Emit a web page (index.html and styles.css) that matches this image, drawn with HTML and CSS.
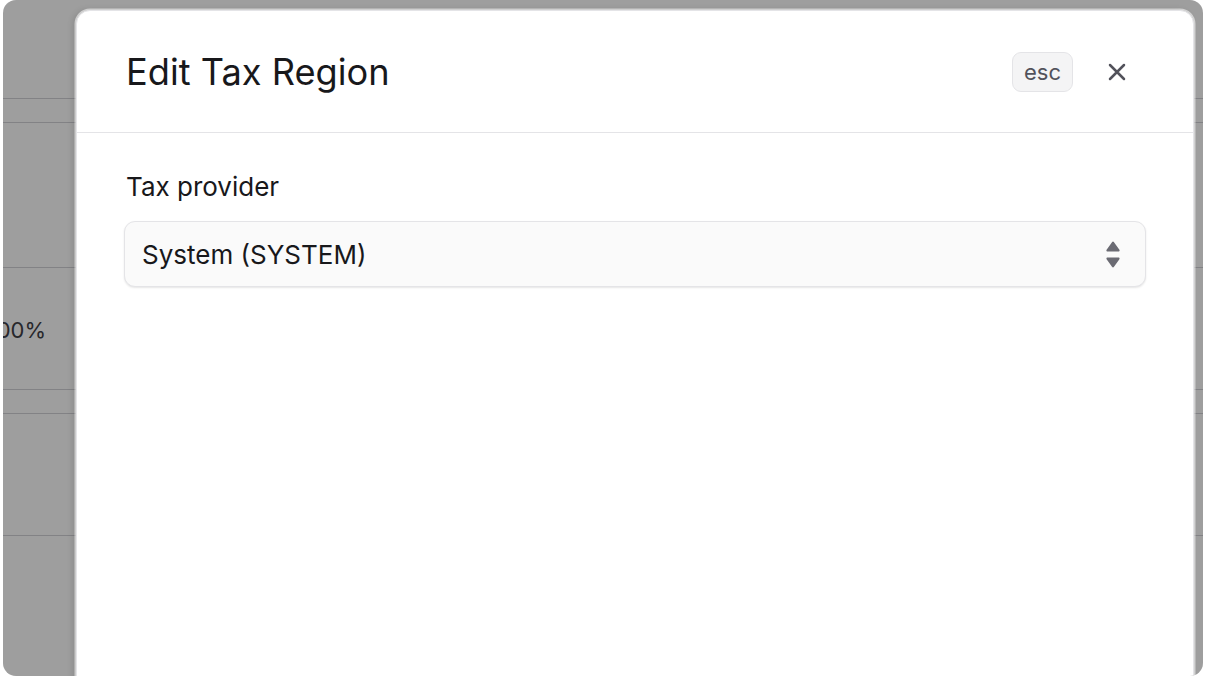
FILE: index.html
```html
<!DOCTYPE html>
<html lang="en">
<head>
<meta charset="utf-8">
<title>Edit Tax Region</title>
<link rel="stylesheet" href="styles.css">
</head>
<body>
<div class="screen">
  <div class="page">
    <div class="row row-head"></div>
    <div class="row row-gap"></div>
    <div class="row row-a"></div>
    <div class="row row-b"><div class="cell"><span>100.00%</span></div></div>
    <div class="row row-gap"></div>
    <div class="row row-c"></div>
    <div class="row row-rest"></div>
  </div>
  <div class="overlay"></div>
  <div class="modal">
    <div class="modal-header">
      <h2 class="title">Edit Tax Region</h2>
      <div class="actions">
        <kbd class="kbd">esc</kbd>
        <button class="close" aria-label="Close">
          <svg width="18" height="18" viewBox="0 0 18 18" fill="none" stroke="currentColor" stroke-width="2.5" stroke-linecap="round"><path d="M2 2L16 16M16 2L2 16"/></svg>
        </button>
      </div>
    </div>
    <div class="modal-body">
      <label class="label">Tax provider</label>
      <div class="select">
        <span class="select-value">System (SYSTEM)</span>
        <svg class="sort" width="14" height="27" viewBox="0 0 14 27" fill="currentColor"><path d="M6 1.2a1.2 1.2 0 0 1 2 0l5.4 7.6c.5.7 0 1.7-.9 1.7H1.5c-.9 0-1.4-1-.9-1.7z"/><path d="M6 25.8a1.2 1.2 0 0 0 2 0l5.4-7.6c.5-.7 0-1.7-.9-1.7H1.5c-.9 0-1.4 1-.9 1.7z"/></svg>
      </div>
    </div>
  </div>
</div>
</body>
</html>
```

FILE: styles.css
```css
* { box-sizing: border-box; }
html, body { margin: 0; padding: 0; background: #ffffff; }
body {
  font-family: Inter, "Noto Sans", "Liberation Sans", sans-serif;
  width: 1205px;
  height: 678px;
  overflow: hidden;
}
.screen {
  position: relative;
  margin: 0 2px 0 3px;
  height: 676px;
  border-radius: 13px;
  overflow: hidden;
  background: #fafafa;
}
.page {
  display: flex;
  flex-direction: column;
  height: 100%;
}
.row { border-bottom: 1px solid #cfcfd3; flex: none; }
.row-head { height: 99px; }
.row-gap { height: 24px; }
.row-a { height: 145px; }
.row-b { height: 122px; display: flex; align-items: center; }
.row-c { height: 122px; }
.row-rest { flex: 1; border-bottom: none; }
.cell {
  width: 43px;
  display: flex;
  justify-content: flex-end;
  overflow: hidden;
  white-space: nowrap;
  font-size: 22px;
  color: #3f3f46;
  padding-top: 2px;
}
.overlay {
  position: absolute;
  inset: 0;
  background: rgba(0, 0, 0, 0.37);
}
.modal {
  position: absolute;
  left: 73px;
  top: 10px;
  width: 1118px;
  height: 700px;
  background: #ffffff;
  border: 1px solid #e4e4e7;
  border-radius: 14px;
  box-shadow: 0 0 0 1.5px rgba(255,255,255,0.55), -3px 0 6px rgba(0,0,0,0.12);
}
.modal-header {
  height: 122px;
  display: flex;
  align-items: center;
  justify-content: space-between;
  padding: 0 58px 0 49px;
  border-bottom: 1px solid #e4e4e7;
}
.title {
  margin: 0;
  font-size: 36.2px;
  font-weight: 400;
  color: #18181b;
}
.actions { display: flex; align-items: center; gap: 26px; }
.kbd {
  font-family: Inter, "Noto Sans", sans-serif;
  height: 40px;
  padding: 0 11px;
  display: flex;
  align-items: center;
  font-size: 22px;
  color: #52525b;
  background: #f4f4f5;
  border: 1px solid #e4e4e7;
  border-radius: 9px;
}
.close {
  width: 36px;
  height: 36px;
  border: none;
  background: none;
  padding: 0;
  color: #52525b;
  display: flex;
  align-items: center;
  justify-content: center;
}
.modal-body {
  padding: 38px 47px 0 47px;
  display: flex;
  flex-direction: column;
  gap: 18px;
}
.label {
  font-size: 26px;
  font-weight: 400;
  line-height: 32px;
  color: #18181b;
  padding-left: 2px;
}
.select {
  height: 66px;
  display: flex;
  align-items: center;
  justify-content: space-between;
  padding: 0 25px 0 17px;
  background: #fafafa;
  border: 1px solid #e4e4e7;
  border-radius: 11px;
  box-shadow: 0 1px 2px rgba(0,0,0,0.1);
}
.select-value {
  font-size: 26px;
  color: #18181b;
}
.sort { color: #6b6b73; }
```
